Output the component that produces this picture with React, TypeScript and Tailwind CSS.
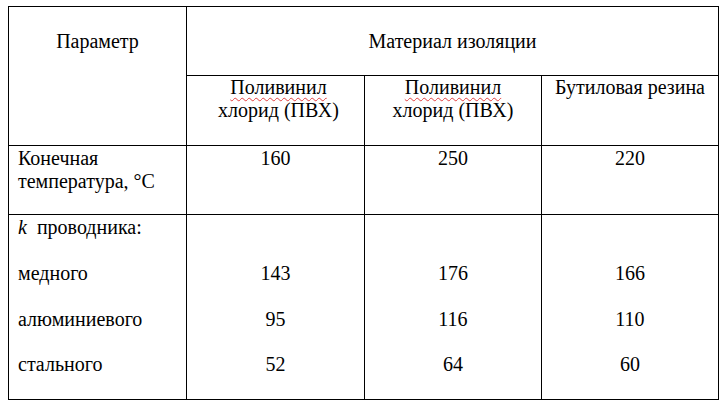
import React from "react";

const cell = "bg-white";

function Sq({ children }: { children: React.ReactNode }) {
  return (
    <span className="underline decoration-wavy decoration-[#e04040] decoration-1 underline-offset-[3px]">
      {children}
    </span>
  );
}

export default function App() {
  return (
    <div className="w-[728px] h-[411px] bg-white text-black font-['Liberation_Serif','Times_New_Roman',serif]">
      <div className="pt-[6px] pl-[8px]">
        <div className="grid w-[711px] grid-cols-[177px_177px_176px_176px] grid-rows-[68px_69px_68px_184px] gap-px p-px bg-black text-[20px] leading-[23px]">
          {/* Header: Параметр spans two rows */}
          <div className={`${cell} row-span-2 pt-[23px] text-center`}>Параметр</div>
          <div className={`${cell} col-span-3 pt-[23px] text-center`}>Материал изоляции</div>

          <div className={`${cell} text-center pl-[6px]`}>
            <Sq>Поливинил</Sq>
            <br />
            хлорид (ПВХ)
          </div>
          <div className={`${cell} text-center`}>
            <Sq>Поливинил</Sq>
            <br />
            хлорид (ПВХ)
          </div>
          <div className={`${cell} text-center`}>Бутиловая резина</div>

          {/* Row: Конечная температура */}
          <div className={`${cell} pl-[9px] pt-[1px]`}>
            Конечная
            <br />
            температура, °C
          </div>
          <div className={`${cell} text-center pt-[1px]`}>160</div>
          <div className={`${cell} text-center pt-[1px]`}>250</div>
          <div className={`${cell} text-center pt-[1px]`}>220</div>

          {/* Row: k проводника */}
          <div className={`${cell} pl-[9px] pt-[1px] flex flex-col`}>
            <div className="h-[46.5px]">
              <span className="italic">k</span>&nbsp; проводника:
            </div>
            <div className="h-[46.5px]">медного</div>
            <div className="h-[46.5px]">алюминиевого</div>
            <div className="h-[46.5px]">стального</div>
          </div>
          <div className={`${cell} pt-[1px] flex flex-col text-center`}>
            <div className="h-[46.5px]"></div>
            <div className="h-[46.5px]">143</div>
            <div className="h-[46.5px]">95</div>
            <div className="h-[46.5px]">52</div>
          </div>
          <div className={`${cell} pt-[1px] flex flex-col text-center`}>
            <div className="h-[46.5px]"></div>
            <div className="h-[46.5px]">176</div>
            <div className="h-[46.5px]">116</div>
            <div className="h-[46.5px]">64</div>
          </div>
          <div className={`${cell} pt-[1px] flex flex-col text-center`}>
            <div className="h-[46.5px]"></div>
            <div className="h-[46.5px]">166</div>
            <div className="h-[46.5px]">110</div>
            <div className="h-[46.5px]">60</div>
          </div>
        </div>
      </div>
    </div>
  );
}
